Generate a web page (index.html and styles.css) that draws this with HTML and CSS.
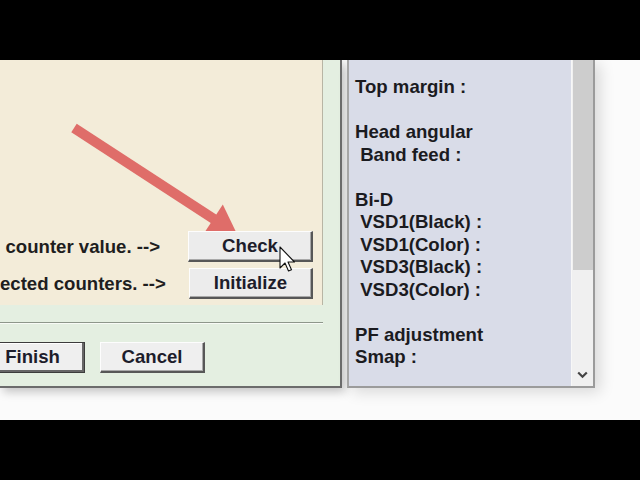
FILE: index.html
```html
<!DOCTYPE html>
<html>
<head>
<meta charset="utf-8">
<link rel="stylesheet" href="styles.css">
</head>
<body>
<div class="top"></div>
<div class="screen">
  <div class="dialog">
    <div class="cream">
      <div class="row">
        <span class="label">counter value. --&gt;</span>
        <button class="btn btn-side">Check</button>
      </div>
      <div class="row row-second">
        <span class="label">ected counters. --&gt;</span>
        <button class="btn btn-side">Initialize</button>
      </div>
    </div>
    <div class="sep"></div>
    <div class="actions">
      <button class="btn btn-action btn-default">Finish</button>
      <button class="btn btn-action">Cancel</button>
    </div>
  </div>
  <div class="panel">
    <div class="list">Top margin :

Head angular
 Band feed :

Bi-D
 VSD1(Black) :
 VSD1(Color) :
 VSD3(Black) :
 VSD3(Color) :

PF adjustment
Smap :</div>
    <div class="scroll">
      <div class="thumb"></div>
      <div class="down">
        <svg width="11" height="8" viewBox="0 0 11 8"><path d="M1.2 1.5 L5.5 5.8 L9.8 1.5" fill="none" stroke="#454545" stroke-width="2.2"/></svg>
      </div>
    </div>
  </div>
</div>
<svg class="arrow" width="640" height="480" viewBox="0 0 640 480">
  <line x1="74" y1="128" x2="215" y2="219.8" stroke="#df6d69" stroke-width="10"/>
  <polygon points="237,234 204.2,232.9 222.8,204.5" fill="#df6d69"/>
</svg>
<svg class="cursor" width="20" height="28" viewBox="0 0 20 28">
  <path d="M1 1 L1 22 L6 17 L9.5 25 L12.5 23.7 L9 16 L15.5 16 Z" fill="#fff" stroke="#111" stroke-width="1.1" stroke-linejoin="round"/>
</svg>
</body>
</html>
```
FILE: styles.css
```css
html, body {
  margin: 0;
  padding: 0;
}
body {
  width: 640px;
  height: 480px;
  overflow: hidden;
  background: #000;
  font-family: "Liberation Sans", Arial, sans-serif;
  position: relative;
}
.top {
  height: 60px;
}
.screen {
  height: 360px;
  background: #fbfbfb;
  display: flex;
  align-items: flex-start;
}
.dialog {
  box-sizing: border-box;
  width: 342px;
  height: 328px;
  background: #e4efe1;
  border-right: 2px solid #6c6c6c;
  border-bottom: 2px solid #6c6c6c;
  box-shadow: 3px 4px 9px rgba(0, 0, 0, 0.22);
  display: flex;
  flex-direction: column;
  flex: none;
}
.cream {
  box-sizing: border-box;
  width: 323px;
  height: 245px;
  background: #f3ecd9;
  border-right: 1px solid #b8b5a4;
  display: flex;
  flex-direction: column;
  justify-content: flex-end;
  gap: 6px;
  padding: 0 9px 6px 0;
}
.row {
  display: flex;
  justify-content: flex-end;
  align-items: center;
  height: 31px;
}
.label {
  font-weight: bold;
  font-size: 18.6px;
  color: #1e1e1e;
  white-space: nowrap;
  margin-right: 28px;
}
.row-second .label {
  margin-right: 23px;
}
.btn {
  box-sizing: border-box;
  height: 31px;
  padding: 0 0 1px 0;
  margin: 0;
  background: #ececec;
  border-top: 1px solid #fdfdfd;
  border-left: 1px solid #fdfdfd;
  border-right: 2px solid #575757;
  border-bottom: 2px solid #575757;
  box-shadow: inset -1px -1px 0 #a9a9a9;
  font-family: "Liberation Sans", Arial, sans-serif;
  font-weight: bold;
  font-size: 18.6px;
  color: #1d1d2b;
  display: flex;
  align-items: center;
  justify-content: center;
}
.btn-side {
  width: 125px;
  position: relative;
  z-index: 2;
}
.sep {
  width: 323px;
  margin-top: 17px;
  border-top: 1px solid #8e978b;
  border-bottom: 1px solid #f8fbf6;
}
.actions {
  display: flex;
  gap: 15px;
  margin-top: 18px;
  margin-left: -20px;
}
.btn-action {
  width: 105px;
  background: #efefef;
}
.btn-default {
  border: 1px solid #3c3c3c;
  box-shadow: inset -2px -2px 0 #666, inset 1px 1px 0 #fff;
}
.panel {
  box-sizing: border-box;
  margin-left: 5px;
  width: 248px;
  height: 328px;
  background: #d9dce8;
  border-left: 2px solid #a6a6a6;
  border-right: 2px solid #9b9b9b;
  border-bottom: 2px solid #9b9b9b;
  box-shadow: 5px 4px 14px rgba(0, 0, 0, 0.14);
  display: flex;
  flex: none;
}
.list {
  flex: 1;
  padding: 16px 0 0 6px;
  font-weight: bold;
  font-size: 18.6px;
  line-height: 22.5px;
  color: #1b1b1f;
  white-space: pre;
  overflow: hidden;
}
.scroll {
  width: 21px;
  background: #f0f0f0;
  border-left: 1px solid #f7f7f7;
  display: flex;
  flex-direction: column;
}
.thumb {
  height: 210px;
  margin-left: 1px;
  background: #cdcdcd;
}
.down {
  margin-top: auto;
  height: 22px;
  display: flex;
  align-items: center;
  justify-content: center;
}
.arrow {
  position: absolute;
  left: 0;
  top: 0;
  z-index: 1;
  pointer-events: none;
}
.cursor {
  position: absolute;
  left: 279px;
  top: 246px;
  z-index: 3;
}
```
